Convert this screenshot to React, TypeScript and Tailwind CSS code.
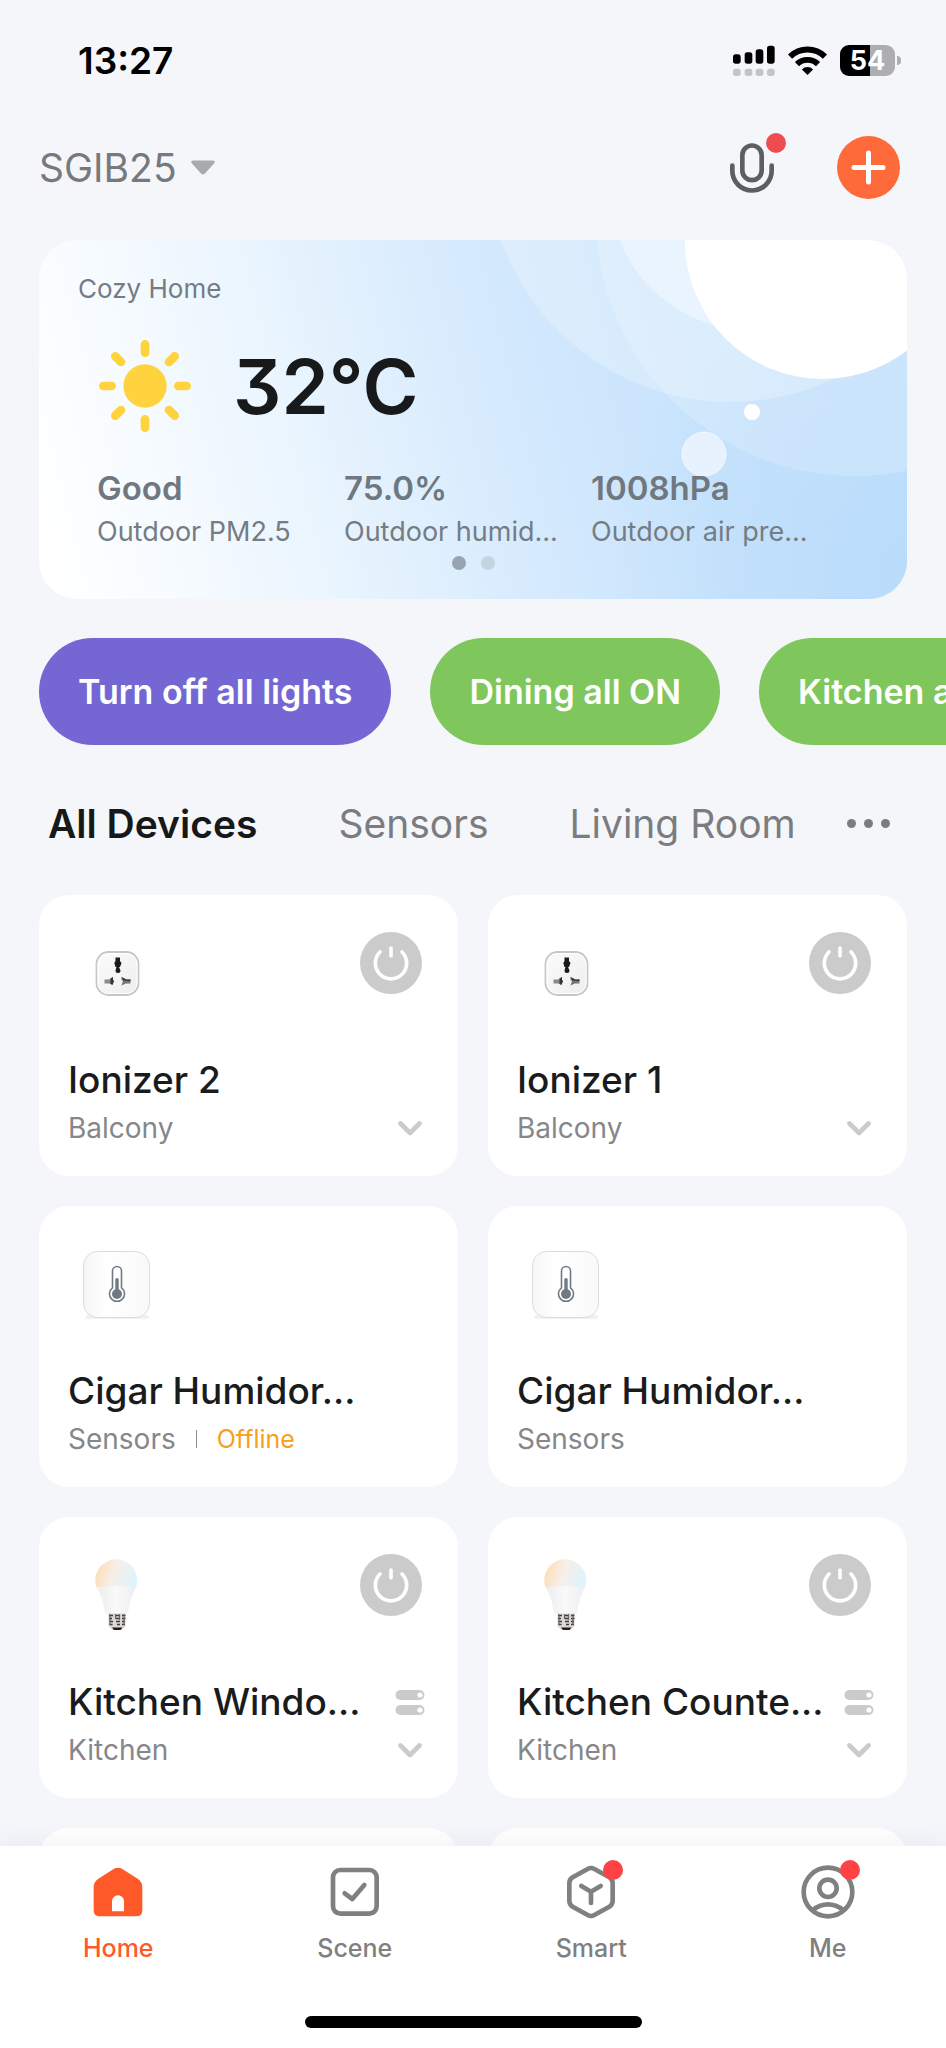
import React, { useState } from "react";

type DeviceKind = "socket" | "thermometer" | "bulb";

interface Device {
  id: string;
  name: string;
  room: string;
  kind: DeviceKind;
  offline?: boolean;
  power?: boolean;
  group?: boolean;
}

const devices: Device[] = [
  { id: "ion2", name: "Ionizer 2", room: "Balcony", kind: "socket", power: true },
  { id: "ion1", name: "Ionizer 1", room: "Balcony", kind: "socket", power: true },
  { id: "cig1", name: "Cigar Humidor...", room: "Sensors", kind: "thermometer", offline: true },
  { id: "cig2", name: "Cigar Humidor...", room: "Sensors", kind: "thermometer" },
  { id: "kit1", name: "Kitchen Windo...", room: "Kitchen", kind: "bulb", power: true, group: true },
  { id: "kit2", name: "Kitchen Counte...", room: "Kitchen", kind: "bulb", power: true, group: true },
];

const metrics = [
  { value: "Good", label: "Outdoor PM2.5" },
  { value: "75.0%", label: "Outdoor humid..." },
  { value: "1008hPa", label: "Outdoor air pre..." },
];

const scenes = [
  { name: "Turn off all lights", color: "bg-[#7467d4]" },
  { name: "Dining all ON", color: "bg-[#7fc75c]" },
  { name: "Kitchen all ON", color: "bg-[#7fc75c]" },
];

function SignalIcon() {
  const bars = [
    [0, 28],
    [35, 22],
    [68, 13],
    [102, 2],
  ];
  return (
    <svg viewBox="0 0 126 93" className="h-[31px] w-[42px]" aria-hidden="true">
      {bars.map(([x, y]) => (
        <g key={x}>
          <rect x={x} y={y} width="23" height={56 - y} rx="8" fill="#000" />
          <rect x={x} y="71" width="23" height="22" rx="8" fill="#c3c4c7" />
        </g>
      ))}
    </svg>
  );
}

function WifiIcon() {
  return (
    <svg viewBox="0 0 118 88" className="h-[29px] w-[39px]" aria-hidden="true">
      <g fill="none" stroke="#000" strokeWidth="18">
        <path d="M6 32 A76 76 0 0 1 112 32" />
        <path d="M27 55 A46 46 0 0 1 91 55" />
      </g>
      <path d="M59 88 L42 71 A24 24 0 0 1 76 71 Z" fill="#000" />
    </svg>
  );
}

function Battery() {
  return (
    <div className="flex items-center gap-[2px]" role="img" aria-label="Battery 54 percent">
      <div className="flex h-[31px] w-[55px] items-center justify-center rounded-[9px] bg-[linear-gradient(90deg,#000_54%,#adaeb1_54%)] text-[27px] leading-none font-bold text-white">
        54
      </div>
      <div className="h-[9px] w-1 rounded-r-full bg-[#adaeb1]" />
    </div>
  );
}

function MicIcon() {
  return (
    <svg viewBox="0 0 132 149" className="h-[50px] w-[44px]" fill="none" stroke="#5d5e61" strokeWidth="14" strokeLinecap="round" aria-hidden="true">
      <rect x="37" y="7" width="58" height="104" rx="29" />
      <path d="M7 67 V83 A59 59 0 0 0 125 83 V67" />
    </svg>
  );
}

function SunIcon() {
  return (
    <svg viewBox="0 0 276 276" className="size-[92px]" stroke="#fed33d" strokeWidth="26" strokeLinecap="round" aria-hidden="true">
      <circle cx="138" cy="138" r="65" fill="#fed33d" stroke="none" />
      <path d="M138 13V38M138 238V263M13 138H38M238 138H263M49 49L66 66M210 210L227 227M49 227L66 210M210 66L227 49" />
    </svg>
  );
}

function WeatherBackdrop() {
  return (
    <svg viewBox="0 0 868 359" preserveAspectRatio="xMaxYMin slice" className="absolute inset-0 size-full" aria-hidden="true">
      <defs>
        <linearGradient id="sky" gradientUnits="userSpaceOnUse" x1="0" y1="300" x2="868" y2="80">
          <stop offset="0" stopColor="#ffffff" />
          <stop offset="0.14" stopColor="#f6fbff" />
          <stop offset="0.3" stopColor="#eaf5fe" />
          <stop offset="0.45" stopColor="#ddeefd" />
          <stop offset="0.58" stopColor="#d2e8fd" />
          <stop offset="0.74" stopColor="#c9e4fc" />
          <stop offset="1" stopColor="#c1e0fc" />
        </linearGradient>
        <radialGradient id="corner" gradientUnits="userSpaceOnUse" cx="868" cy="330" r="300">
          <stop offset="0" stopColor="#badcfb" />
          <stop offset="1" stopColor="#badcfb" stopOpacity="0" />
        </radialGradient>
      </defs>
      <rect width="868" height="359" fill="url(#sky)" />
      <rect width="868" height="359" fill="url(#corner)" />
      <circle cx="691" cy="-81" r="243" fill="#fff" fillOpacity="0.24" />
      <circle cx="816" cy="-23" r="259" fill="#fff" fillOpacity="0.18" />
      <circle cx="712" cy="-51" r="141" fill="#eef6ff" fillOpacity="0.75" />
      <circle cx="784" cy="1" r="138" fill="#fff" />
      <circle cx="713" cy="172" r="8" fill="#fff" />
      <circle cx="665" cy="214" r="22" fill="#e7f2fe" stroke="#f2f8ff" strokeWidth="1" />
    </svg>
  );
}

function SocketPicture() {
  return (
    <svg viewBox="0 0 94 94" className="size-full" aria-hidden="true">
      <defs>
        <linearGradient id="socket-face" x1="0" y1="0" x2="1" y2="1">
          <stop offset="0" stopColor="#fbfbfb" />
          <stop offset="1" stopColor="#eeeeee" />
        </linearGradient>
      </defs>
      <rect x="26.500" y="25" width="42" height="43" rx="12" fill="url(#socket-face)" stroke="#c6c6c6" strokeWidth="1.800" />
      <rect x="28" y="26.500" width="39" height="40" rx="10.500" fill="none" stroke="#fff" strokeWidth="1" />
      <path d="M45.500 30.500h4.500v3.500l1.500 2-1.500 4h-1l1.500 3.500a2.500 2.500 0 1 1-5 0l1-3.500h-1L44.300 36l1.200-2z" fill="#1b1b1b" />
      <path d="M34.500 52.500h4.500l4-2.500v3l1 1-1.500 3.500-3.500-1h-4.500z" fill="#8a8a86" />
      <path d="M40.500 51.500l2.500-1.500v3l1 1-1.500 4-2-1z" fill="#353533" />
      <path d="M60.500 52.500H56L51.500 50v3l1.500 1-1.500 4.500 4.500-2h4.500z" fill="#757572" />
      <path d="M51.500 50l5 2.500h4v1.500l-7-.5z" fill="#353533" />
    </svg>
  );
}

function ThermometerPicture() {
  return (
    <svg viewBox="0 0 94 94" className="size-full" aria-hidden="true">
      <defs>
        <linearGradient id="tile" x1="0" y1="0" x2="1" y2="0">
          <stop offset="0" stopColor="#f6f6f6" />
          <stop offset="0.35" stopColor="#ffffff" />
          <stop offset="1" stopColor="#f9f9f9" />
        </linearGradient>
      </defs>
      <rect x="15" y="77" width="64" height="4" rx="2" fill="#f1f1f1" />
      <rect x="13.500" y="13.500" width="66" height="66" rx="14" fill="url(#tile)" stroke="#dcdcdc" />
      <path d="M42.500 49.800V33a4.500 4.500 0 0 1 9 0v16.800a7.500 7.500 0 1 1-9 0z" fill="#fff" stroke="#717a84" strokeWidth="1.600" />
      <circle cx="47" cy="56" r="5" fill="#717a84" />
      <rect x="45.300" y="40" width="3.400" height="15" rx="1.500" fill="#717a84" />
    </svg>
  );
}

function BulbPicture() {
  return (
    <svg viewBox="0 0 94 94" className="size-full" aria-hidden="true">
      <defs>
        <linearGradient id="globe" x1="0" y1="0.400" x2="1" y2="0.600">
          <stop offset="0" stopColor="#fddcb4" />
          <stop offset="0.450" stopColor="#f7efe8" />
          <stop offset="1" stopColor="#ddf3fe" />
        </linearGradient>
        <linearGradient id="neck" x1="0" y1="0" x2="1" y2="0">
          <stop offset="0" stopColor="#ededef" />
          <stop offset="0.500" stopColor="#f9f9fa" />
          <stop offset="1" stopColor="#eeeef0" />
        </linearGradient>
      </defs>
      <path d="M26 37c3 5 6 11 7.500 19 1 4 1 8 3 9h20c2-1 2-5 3-9 1.500-8 4.500-14 7-19z" fill="url(#neck)" />
      <path d="M26.500 38.500a21 21 0 1 1 39.500 0q-19.500-3-39.500 0z" fill="url(#globe)" />
      <path d="M38.500 64.500h17V77l-4 4h-9l-4-4z" fill="#dcd8d4" />
      <path d="M39 66.500h4M46 66.500h4M52 66.500h3.500M39 69.500h3M46 69.500h3M52 69.500h3.500M39.500 72.500h3.500M46 72.500h4M52 72.500h3M39.500 75.500h3M47 75.500h3M52 75.500h3" stroke="#3d3936" strokeWidth="1.500" />
      <path d="M40 65v11M45.500 65v5M49.500 65v6M54 65v11" stroke="#6d6763" strokeWidth="1.200" />
      <path d="M42 78.500h10.500l-2 2.500h-6.500z" fill="#1f1c1b" />
    </svg>
  );
}

function PowerIcon() {
  return (
    <svg viewBox="0 0 186 186" className="size-full" fill="none" stroke="#fff" strokeWidth="11" strokeLinecap="round" aria-hidden="true">
      <path d="M60 60 A47 47 0 1 0 126 60" />
      <path d="M93 48 V71" />
    </svg>
  );
}

function ChevronIcon() {
  return (
    <svg viewBox="0 0 24 15" className="h-[15px] w-6" fill="none" stroke="#cbcbcb" strokeWidth="4.600" strokeLinecap="round" strokeLinejoin="round" aria-hidden="true">
      <path d="M2.500 2.500 L12 12 L21.500 2.500" />
    </svg>
  );
}

function GroupIcon() {
  return (
    <svg viewBox="0 0 30 25" className="h-[25px] w-[30px]" aria-hidden="true">
      <rect x="0.500" width="29" height="10" rx="5" fill="#cbcbcb" />
      <rect x="0.500" y="15" width="29" height="10" rx="5" fill="#cbcbcb" />
      <circle cx="25" cy="5" r="2.600" fill="#fff" />
      <circle cx="25" cy="20" r="2.600" fill="#fff" />
    </svg>
  );
}

function DevicePicture({ kind }: { kind: DeviceKind }) {
  if (kind === "socket") return <SocketPicture />;
  if (kind === "thermometer") return <ThermometerPicture />;
  return <BulbPicture />;
}

function DeviceCard({ device }: { device: Device }) {
  return (
    <article className="flex h-[281px] flex-col rounded-[30px] bg-white pt-8 pr-[33px] pl-[29px]">
      <div className="flex items-start justify-between">
        <div className="ml-[2px] size-[94px]">
          <DevicePicture kind={device.kind} />
        </div>
        {device.power && (
          <button type="button" aria-label={`Power ${device.name}`} className="mt-[5px] mr-[3px] size-[62px] rounded-full bg-[#cbcbcb]">
            <PowerIcon />
          </button>
        )}
      </div>
      <div className="mt-[35px] flex h-12 items-center justify-between">
        <h2 className="text-[37px] leading-[48px] font-medium whitespace-nowrap text-[#1a1b1c]">{device.name}</h2>
        {device.group && <GroupIcon />}
      </div>
      <div className="mt-1 flex h-10 items-center justify-between">
        <p className="flex items-center text-[28px] leading-10 text-[#86878a]">
          {device.room}
          {device.offline && (
            <>
              <span className="ml-5 h-[18px] w-px bg-[#8c8c8c]" />
              <span className="ml-5 text-[25px] text-[#f8a01c]">Offline</span>
            </>
          )}
        </p>
        {device.power && (
          <button type="button" aria-label={`Expand ${device.name}`} className="mr-[3px]">
            <ChevronIcon />
          </button>
        )}
      </div>
    </article>
  );
}

function HomeIcon() {
  return (
    <svg viewBox="0 0 168 168" className="size-14" aria-hidden="true">
      <path
        fillRule="evenodd"
        fill="#ff592a"
        d="M71 15 Q84 7 97 15 L143 44 Q157 54 157 70 V139 Q157 157 139 157 H29 Q11 157 11 139 V70 Q11 54 25 44 Z M66 142 H102 V112 A18 18 0 0 0 66 112 Z"
      />
    </svg>
  );
}

function SceneIcon() {
  return (
    <svg viewBox="0 0 168 168" className="size-14" fill="none" stroke="#808080" strokeWidth="14" strokeLinecap="round" strokeLinejoin="round" aria-hidden="true">
      <rect x="18" y="18" width="131" height="131" rx="22" />
      <path d="M53 88 L76 105 L112 63" />
    </svg>
  );
}

function SmartIcon() {
  return (
    <svg viewBox="0 0 168 168" className="size-14" fill="none" stroke="#808080" strokeWidth="14" strokeLinecap="round" strokeLinejoin="round" aria-hidden="true">
      <path d="M74 15 Q84 9 94 15 L139 40 Q149 46 149 58 V110 Q149 122 139 128 L94 153 Q84 159 74 153 L29 128 Q19 122 19 110 V58 Q19 46 29 40 Z" />
      <path d="M55 66 L84 83 L113 66 M84 83 V117" />
    </svg>
  );
}

function MeIcon() {
  return (
    <svg viewBox="0 0 168 168" className="size-14" fill="none" stroke="#808080" strokeWidth="14" aria-hidden="true">
      <circle cx="84" cy="84" r="73" />
      <circle cx="84" cy="73" r="26" />
      <path d="M37 138 Q84 104 131 138" />
    </svg>
  );
}

const navItems = [
  { name: "Home", Icon: HomeIcon, badge: false },
  { name: "Scene", Icon: SceneIcon, badge: false },
  { name: "Smart", Icon: SmartIcon, badge: true },
  { name: "Me", Icon: MeIcon, badge: true },
];

const tabs = ["All Devices", "Sensors", "Living Room"];

export default function App() {
  const [tab, setTab] = useState(tabs[0]);

  return (
    <div className="flex h-screen flex-col overflow-hidden bg-[#f5f6fa] font-['Inter','Liberation_Sans',sans-serif]">
      <div className="flex h-[120px] shrink-0 items-center justify-between pr-[45px] pl-[78px]">
        <time className="text-[37px] leading-none font-semibold text-black">13:27</time>
        <div className="flex items-center gap-[13px]">
          <SignalIcon />
          <WifiIcon />
          <Battery />
        </div>
      </div>

      <header className="flex h-[95px] shrink-0 items-center justify-between pr-[46px] pl-[39px]">
        <button type="button" className="flex items-center gap-[14px] text-[39px] leading-none text-[#78797c]">
          SGIB25
          <svg viewBox="0 0 24 15" className="h-[15px] w-6" aria-hidden="true">
            <path d="M2 0.500H22Q25 1 23 3.500L14 13.500Q12 15.500 10 13.500L1 3.500Q-1 1 2 0.500Z" fill="#a9aaad" />
          </svg>
        </button>
        <div className="flex items-center gap-[63px]">
          <button type="button" aria-label="Voice assistant" className="relative">
            <MicIcon />
            <span className="absolute -top-[10px] -right-3 size-5 rounded-full bg-[#ee4d50]" />
          </button>
          <button type="button" aria-label="Add device" className="size-[63px] rounded-full bg-[#ff6a3b]">
            <svg viewBox="0 0 63 63" className="size-full" stroke="#fff" strokeWidth="5" strokeLinecap="round" aria-hidden="true">
              <path d="M31.500 17V46M17 31.500H46" />
            </svg>
          </button>
        </div>
      </header>

      <main className="min-h-0 flex-1 overflow-hidden pt-[25px]">
        <section className="relative mx-[39px] h-[359px] overflow-hidden rounded-[38px]">
          <WeatherBackdrop />
          <div className="relative flex h-full flex-col px-[39px] pt-[29px]">
            <p className="text-[26px] leading-10 text-[#757c84]">Cozy Home</p>
            <div className="mt-[31px] flex items-center gap-[42px] pl-[21px]">
              <SunIcon />
              <p className="text-[76px] leading-[92px] font-semibold text-[#17191b] [font-feature-settings:'cv09']">32°C</p>
            </div>
            <dl className="mt-[34px] ml-[19px] grid grid-cols-[247px_247px_1fr]">
              {metrics.map((m) => (
                <div key={m.label} className="flex flex-col-reverse gap-[2px]">
                  <dt className="text-[27px] leading-10 whitespace-nowrap text-[#757c84]">{m.label}</dt>
                  <dd className="text-[33px] leading-[44px] font-semibold text-[#6f7880]">{m.value}</dd>
                </div>
              ))}
            </dl>
            <div className="mt-1 flex justify-center gap-[15px]">
              <span className="size-[14px] rounded-full bg-[#98a5b0]" />
              <span className="size-[14px] rounded-full bg-[#c4d5e2]" />
            </div>
          </div>
        </section>

        <section className="mt-[39px] flex gap-[39px] overflow-hidden pl-[39px]">
          {scenes.map((s) => (
            <button
              key={s.name}
              type="button"
              className={`h-[107px] shrink-0 rounded-full px-[39px] text-[34px] leading-none font-semibold whitespace-nowrap text-white ${s.color}`}
            >
              {s.name}
            </button>
          ))}
        </section>

        <div className="mt-[50px] flex h-14 items-center pr-[56px] pl-12">
          <div role="tablist" className="flex flex-1 items-center gap-[81px]">
            {tabs.map((t) => (
              <button
                key={t}
                type="button"
                role="tab"
                aria-selected={t === tab}
                onClick={() => setTab(t)}
                className={`text-[39px] leading-none whitespace-nowrap ${t === tab ? "font-semibold text-[#17181a]" : "text-[#7b7c7f]"}`}
              >
                {t}
              </button>
            ))}
          </div>
          <button type="button" aria-label="More rooms" className="flex gap-2">
            <span className="size-[9px] rounded-full bg-[#7b7c7f]" />
            <span className="size-[9px] rounded-full bg-[#7b7c7f]" />
            <span className="size-[9px] rounded-full bg-[#7b7c7f]" />
          </button>
        </div>

        <section className="mt-11 grid grid-cols-2 gap-[30px] px-[39px]">
          {devices.map((d) => (
            <DeviceCard key={d.id} device={d} />
          ))}
          <div className="h-[281px] rounded-[30px] bg-white" />
          <div className="h-[281px] rounded-[30px] bg-white" />
        </section>
      </main>

      <nav className="relative shrink-0 bg-white shadow-[0_-2px_24px_rgba(60,80,100,0.08)]">
        <div className="grid grid-cols-4 pt-[18px]">
          {navItems.map(({ name, Icon, badge }) => (
            <a key={name} href={`#${name.toLowerCase()}`} className="flex flex-col items-center">
              <span className="relative">
                <Icon />
                {badge && <span className="absolute -top-1 -right-1 size-5 rounded-full bg-[#ff4345]" />}
              </span>
              <span className={`mt-3 text-[25px] leading-8 font-medium ${name === "Home" ? "text-[#ff592a]" : "text-[#808080]"}`}>{name}</span>
            </a>
          ))}
        </div>
        <div className="mx-auto mt-[52px] mb-5 h-3 w-[337px] rounded-full bg-black" />
      </nav>
    </div>
  );
}
